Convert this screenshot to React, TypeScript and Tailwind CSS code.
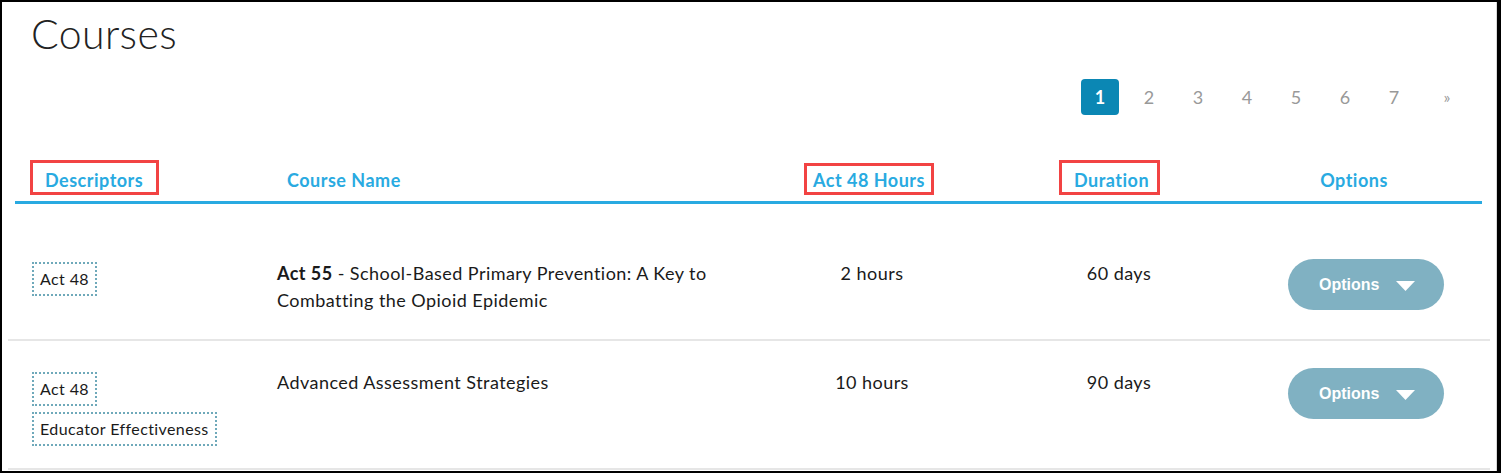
import React from "react";

const font = { fontFamily: "Lato, 'Open Sans', sans-serif" };

function Tag({ label }: { label: string }) {
  return (
    <div className="inline-block border-2 border-dotted border-[#6fa9ba] px-[6px] py-[5px] text-[16px] leading-[20px] tracking-[0.4px] text-[#1a1a1a]">
      {label}
    </div>
  );
}

function OptionsButton() {
  return (
    <div className="flex h-[51px] w-[156px] items-center rounded-full bg-[#80b1c2] pl-[31px] text-white">
      <span className="text-[16px] font-bold" style={{ fontFamily: "'Liberation Sans', Arial, sans-serif" }}>
        Options
      </span>
      <svg width="19" height="10" viewBox="0 0 19 10" className="ml-[17px] mt-[2px]">
        <path d="M0 0 L19 0 L9.5 10 Z" fill="#ffffff" />
      </svg>
    </div>
  );
}

const rows = [
  {
    tags: ["Act 48"],
    name: (
      <>
        <span className="font-bold">Act 55</span> - School-Based Primary Prevention: A Key to Combatting the Opioid
        Epidemic
      </>
    ),
    hours: "2 hours",
    days: "60 days",
  },
  {
    tags: ["Act 48", "Educator Effectiveness"],
    name: <>Advanced Assessment Strategies</>,
    hours: "10 hours",
    days: "90 days",
  },
];

export default function App() {
  return (
    <div
      className="h-[473px] w-[1501px] border-t-2 border-b-2 border-l-2 border-r-4 border-black bg-white"
      style={font}
    >
      <div className="flex h-full flex-col border-r border-[#d9d9d9]">
        <div className="pl-[29px] pt-[11px] text-[41px] font-light leading-[41px] tracking-[0.4px] text-[#222]">
          Courses
        </div>

        <div className="mt-[25px] flex justify-end pr-[30px] text-[18px] text-[#999]">
          <div className="flex h-[36px] w-[38px] items-center justify-center rounded-[4px] bg-[#0b87b4] font-bold text-white">
            1
          </div>
          {["2", "3", "4", "5", "6", "7"].map((n) => (
            <div key={n} className="ml-[11px] flex h-[36px] w-[38px] items-center justify-center">
              {n}
            </div>
          ))}
          <div className="ml-[15px] flex h-[36px] w-[38px] items-center justify-center text-[16px]">»</div>
        </div>

        {/* header */}
        <div className="ml-[13px] mr-[14px] mt-[39px] grid h-[50px] grid-cols-[257px_460px_280px_214px_1fr] items-end border-b-[3px] border-[#29aae1] pb-[5px] text-[18px] font-bold leading-[31px] tracking-[0.5px] text-[#29aae1]">
          <div className="pl-[15px]">
            <span className="inline-block border-[3px] border-[#f24343] pb-[0px] pl-[12px] pr-[13px] pt-[5px] leading-[24px]">
              Descriptors
            </span>
          </div>
          <div className="pl-[15px] pt-[1px]">Course Name</div>
          <div className="pl-[72px]">
            <span className="inline-block border-[3px] border-[#f24343] px-[6px] pb-[0px] pt-[3px] leading-[23px]">
              Act 48 Hours
            </span>
          </div>
          <div className="pl-[47px]">
            <span className="inline-block border-[3px] border-[#f24343] pb-[0px] pl-[12px] pr-[8px] pt-[5px] leading-[24px]">
              Duration
            </span>
          </div>
          <div className="pt-[1px] text-center">Options</div>
        </div>

        {rows.map((r, i) => (
          <div
            key={i}
            className={
              "mx-[6px] grid grid-cols-[264px_460px_280px_214px_1fr] border-b-2 border-[#e6e6e6] text-[18px] leading-[27px] tracking-[0.45px] text-[#1a1a1a] " +
              (i === 0 ? "h-[137px] pt-[55px]" : "h-[129px] pt-[27px]")
            }
          >
            <div className={"flex flex-col items-start gap-[6px] pl-[24px] tracking-normal " + (i === 0 ? "pt-[3px]" : "pt-[4px]")}>
              {r.tags.map((t) => (
                <Tag key={t} label={t} />
              ))}
            </div>
            <div className="pl-[5px] pr-[10px] pt-[1px]">{r.name}</div>
            <div className="pt-[1px] text-center">{r.hours}</div>
            <div className="pt-[1px] text-center">{r.days}</div>
            <div className="flex justify-center pl-[16px] tracking-normal">
              <OptionsButton />
            </div>
          </div>
        ))}
      </div>
    </div>
  );
}
